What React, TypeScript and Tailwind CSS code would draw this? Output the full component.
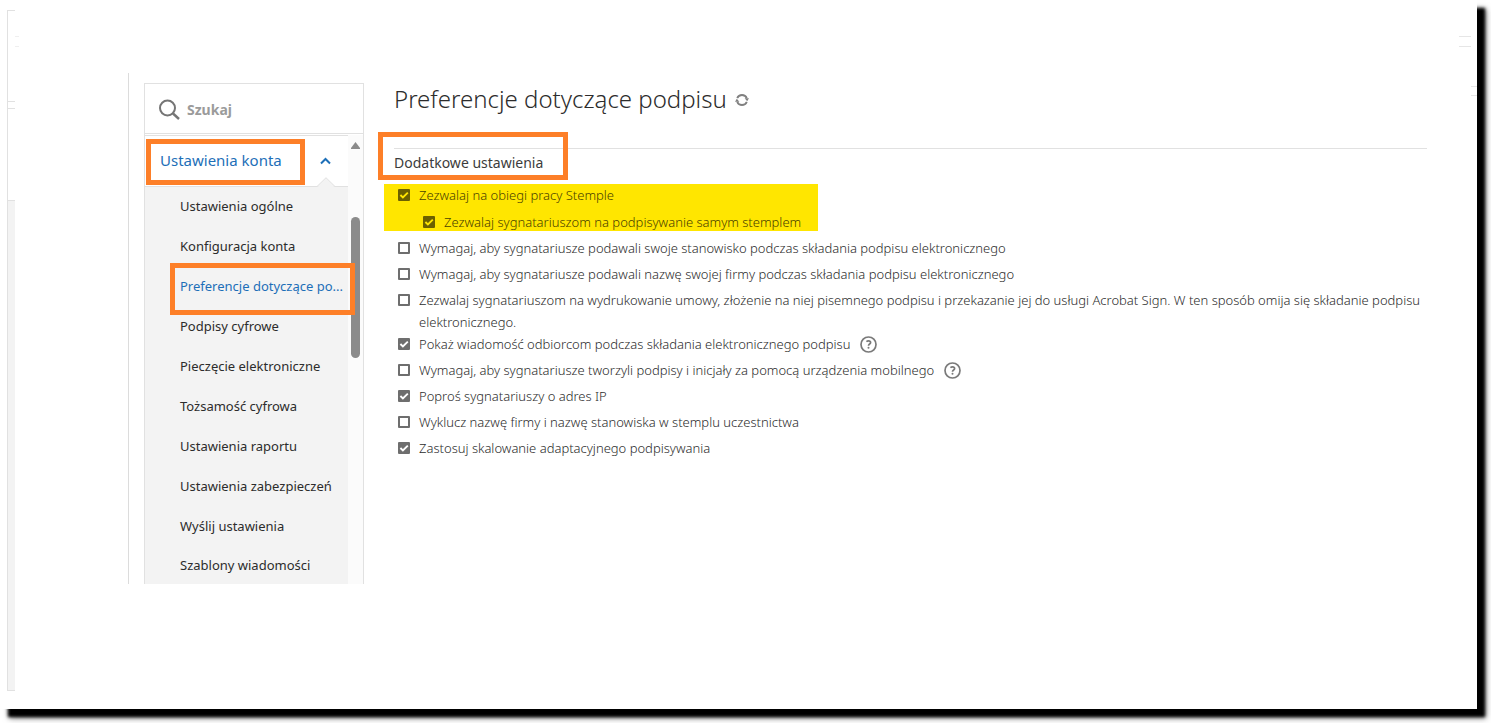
import React, { useState } from 'react'

const menuItems = [
  'Ustawienia ogólne',
  'Konfiguracja konta',
  'Preferencje dotyczące po...',
  'Podpisy cyfrowe',
  'Pieczęcie elektroniczne',
  'Tożsamość cyfrowa',
  'Ustawienia raportu',
  'Ustawienia zabezpieczeń',
  'Wyślij ustawienia',
  'Szablony wiadomości',
]

const stampOptions = [
  { id: 'stamps', label: 'Zezwalaj na obiegi pracy Stemple', checked: true, nested: false },
  { id: 'stamp-only', label: 'Zezwalaj sygnatariuszom na podpisywanie samym stemplem', checked: true, nested: true },
]

const options = [
  { id: 'title', label: 'Wymagaj, aby sygnatariusze podawali swoje stanowisko podczas składania podpisu elektronicznego', checked: false, help: false },
  { id: 'company', label: 'Wymagaj, aby sygnatariusze podawali nazwę swojej firmy podczas składania podpisu elektronicznego', checked: false, help: false },
  { id: 'print', label: 'Zezwalaj sygnatariuszom na wydrukowanie umowy, złożenie na niej pisemnego podpisu i przekazanie jej do usługi Acrobat Sign. W ten sposób omija się składanie podpisu elektronicznego.', checked: false, help: false },
  { id: 'message', label: 'Pokaż wiadomość odbiorcom podczas składania elektronicznego podpisu', checked: true, help: true },
  { id: 'mobile', label: 'Wymagaj, aby sygnatariusze tworzyli podpisy i inicjały za pomocą urządzenia mobilnego', checked: false, help: true },
  { id: 'ip', label: 'Poproś sygnatariuszy o adres IP', checked: true, help: false },
  { id: 'exclude', label: 'Wyklucz nazwę firmy i nazwę stanowiska w stemplu uczestnictwa', checked: false, help: false },
  { id: 'scaling', label: 'Zastosuj skalowanie adaptacyjnego podpisywania', checked: true, help: false },
]

function Checkbox({ id, defaultChecked, marked = false }) {
  const [checked, setChecked] = useState(defaultChecked)
  const color = marked ? 'border-[#6b6000] checked:bg-[#6b6000]' : 'border-[#6e6e6e] checked:bg-[#6e6e6e]'
  return (
    <span className="mt-[5px] grid size-3 shrink-0">
      <input
        id={id}
        type="checkbox"
        checked={checked}
        onChange={(e) => setChecked(e.target.checked)}
        className={`col-start-1 row-start-1 size-3 appearance-none rounded-[1px] border-2 ${color}`}
      />
      {checked && (
        <svg viewBox="0 0 12 12" className={`pointer-events-none col-start-1 row-start-1 size-3 ${marked ? 'text-[#ffe600]' : 'text-white'}`}>
          <path d="M2.4 6 4.900 8.400 9.800 3.600" fill="none" stroke="currentColor" strokeWidth="1.900" />
        </svg>
      )}
    </span>
  )
}

function HelpButton() {
  return (
    <button type="button" aria-label="Pomoc" className="mt-[3px] ml-[10px] size-[17px] shrink-0">
      <svg viewBox="0 0 17 17" className="size-[17px] text-[#7a7a7a]" fill="none" stroke="currentColor">
        <circle cx="8.5" cy="8.5" r="7.500" strokeWidth="1.700" />
        <path d="M6.400 5.600c.6-.5 1.300-.8 2-.8 1.300 0 2.200.7 2.200 1.700 0 1.500-2.100 1.600-2.100 3.200" strokeWidth="1.700" />
        <circle cx="8.500" cy="11.800" r="1" fill="currentColor" stroke="none" />
      </svg>
    </button>
  )
}

function Sidebar() {
  return (
    <aside className="mt-[10px] flex w-[220px] shrink-0 flex-col border border-b-0 border-[#e1e1e1]">
      <form className="flex h-[50px] shrink-0 items-center gap-[7px] border-b border-[#e1e1e1] pt-[2px] pl-[14px]">
        <svg viewBox="0 0 21 21" className="size-[21px] shrink-0 text-[#757575]" fill="none" stroke="currentColor" strokeWidth="2">
          <circle cx="8.500" cy="9" r="7.500" />
          <path d="m14 14.500 6 5.500" strokeWidth="2.400" />
        </svg>
        <input
          type="text"
          aria-label="Szukaj"
          placeholder="Szukaj"
          className="w-full min-w-0 text-sm font-bold outline-none placeholder:text-[#9b9b9b]"
        />
      </form>
      <div className="mt-px flex min-h-0 flex-1">
        <nav className="flex min-w-0 flex-1 flex-col border-t border-[#e1e1e1]">
          <div className="relative flex h-[51px] shrink-0 items-center justify-between border-b border-[#e1e1e1] pr-[17px] pb-[2px] pl-[15px]">
            <button type="button" className="text-[15px] leading-5 text-[#1d6fb8]">Ustawienia konta</button>
            <svg viewBox="0 0 11 8" className="mt-[2px] h-2 w-[11px] text-[#1d6fb8]">
              <path d="m1 6.500 4.500-4.500L10 6.500" fill="none" stroke="currentColor" strokeWidth="2" />
            </svg>
            <svg viewBox="0 0 18 10" className="absolute right-[13px] -bottom-px h-[10px] w-[18px]">
              <path d="M0 9.500 9 .7l9 8.800" fill="#f3f3f3" stroke="#e1e1e1" />
              <path d="M1 10 9 2l8 8z" fill="#f3f3f3" />
            </svg>
            <span className="pointer-events-none absolute top-[3px] left-px h-[46px] w-[159px] border-5 border-[#fd7f28]" />
          </div>
          <ul className="min-h-0 flex-1 bg-[#f3f3f3]">
            {menuItems.map((item, i) => (
              <li key={item} className="flex h-10 items-center pb-[2px] pl-[35px] last:h-[38px]">
                <a href="#" className={`text-[13px] leading-5 whitespace-nowrap ${i === 2 ? 'text-[#1d6fb8]' : 'text-[#2c2c2c]'}`}>{item}</a>
              </li>
            ))}
          </ul>
        </nav>
        <div className="flex w-[15px] shrink-0 flex-col items-center bg-[#fbfbfb] pt-[7px]">
          <svg viewBox="0 0 9 7" className="h-[7px] w-[9px] text-[#8b8b8b]">
            <path d="M4.500 0 9 6v1H0V6z" fill="currentColor" />
          </svg>
          <span className="mt-[68px] h-[141px] w-[9px] rounded-full bg-[#8b8b8b]" />
        </div>
      </div>
      <span className="pointer-events-none absolute top-[190px] left-[41px] h-[52px] w-[185px] border-5 border-[#fd7f28]" />
    </aside>
  )
}

function Preferences() {
  return (
    <section className="min-w-0 flex-1 pt-2 pl-[30px]">
      <header className="flex items-center gap-2">
        <h1 className="text-2xl leading-9 font-light text-[#2c2c2c]">Preferencje dotyczące podpisu</h1>
        <button type="button" aria-label="Odśwież">
          <svg viewBox="0 0 14 14" className="mt-[2px] size-[14px] text-[#808080]" fill="none" stroke="currentColor" strokeWidth="1.800">
            <path d="M2.200 5.200a5.200 5.200 0 0 1 9.600 0M11.800 8.800a5.200 5.200 0 0 1-9.600 0" />
            <path d="M9.600 5.200H14L12.200 8.200zM4.400 8.800H0L1.800 5.800z" fill="currentColor" stroke="none" />
          </svg>
        </button>
      </header>
      <div className="relative mt-[31px] border-t border-[#e1e1e1] pt-1">
        <h2 className="text-sm leading-5 text-[#3c3c3c]">Dodatkowe ustawienia</h2>
        <span className="pointer-events-none absolute -top-[17px] -left-4 h-[48px] w-[190px] border-5 border-[#fd7f28]" />
      </div>
      <ul className="mt-[11px] -ml-[10px] w-[434px] bg-[#ffe600] pl-[14px] text-[13px] leading-[22px] font-light text-[#4a4200]">
        {stampOptions.map((option) => (
          <li key={option.id} className={`flex gap-[9px] first:h-[27px] last:h-5 ${option.nested ? 'pl-[25px]' : ''}`}>
            <Checkbox id={option.id} defaultChecked={option.checked} marked />
            <label htmlFor={option.id}>{option.label}</label>
          </li>
        ))}
      </ul>
      <ul className="mt-[6px] pl-1 text-[13px] leading-[22px] font-light text-[#2c2c2c]">
        {options.map((option) => (
          <li key={option.id} className="flex min-h-[26px]">
            <Checkbox id={option.id} defaultChecked={option.checked} />
            <label htmlFor={option.id} className="ml-[9px]">{option.label}</label>
            {option.help && <HelpButton />}
          </li>
        ))}
      </ul>
    </section>
  )
}

export default function App() {
  return (
    <main className="flex h-screen overflow-hidden bg-white font-['Noto_Sans',sans-serif]">
      <div className="mr-[14px] mb-[14px] flex flex-1 bg-white shadow-[8px_8px_3px_#000,9px_9px_6px_#0008]">
        <div className="mt-[10px] mb-[18px] ml-[7px] flex w-2 shrink-0 flex-col border-y border-l border-[#e1e1e1]">
          <span className="mt-[90px] h-2 border-y border-[#e1e1e1]" />
          <span className="mt-[91px] flex-1 border-t border-[#e1e1e1] bg-[#f3f3f3]" />
        </div>
        <div className="mt-9 h-[11px] w-1 shrink-0 border-y border-[#efefef]" />
        <div className="relative mt-[73px] mr-8 mb-[125px] ml-[109px] flex min-w-0 flex-1 border-l border-[#dcdcdc] pl-[15px]">
          <Sidebar />
          <Preferences />
        </div>
        <div className="flex w-[18px] shrink-0 flex-col">
          <span className="mt-9 mr-[6px] h-[11px] border-y border-[#e6e6e6]" />
          <span className="mt-[39px] ml-3 h-[10px] border-y border-[#e6e6e6]" />
        </div>
      </div>
    </main>
  )
}
